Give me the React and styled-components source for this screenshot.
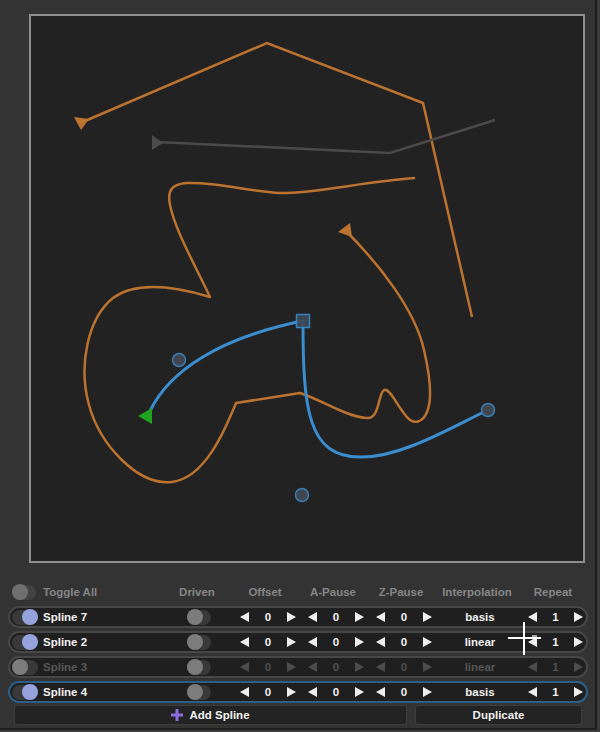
import styled, { createGlobalStyle } from "styled-components";

const GlobalStyle = createGlobalStyle`
  body {
    margin: 0;
    background: #3a3a3a;
    font-family: "Liberation Sans", Arial, sans-serif;
  }
`;

const ORANGE = "#bb732f";
const BLUE = "#3a8dcf";

const splines = [
  { id: 7, on: true, interp: "basis", repeat: 1 },
  { id: 2, on: true, interp: "linear", repeat: 1 },
  { id: 3, on: false, interp: "linear", repeat: 1 },
  { id: 4, on: true, interp: "basis", repeat: 1, selected: true },
];

const Arrow = ({ dir, muted }) => (
  <svg width="9" height="10" viewBox="0 0 9 10">
    <polygon
      points={dir === "left" ? "9,0 9,10 0,5" : "0,0 0,10 9,5"}
      fill={muted ? "#4c4c4c" : "#eeeeee"}
    />
  </svg>
);

const Stepper = ({ value, muted }) => (
  <StyledStepper $muted={muted}>
    <Arrow dir="left" muted={muted} />
    <span>{value}</span>
    <Arrow dir="right" muted={muted} />
  </StyledStepper>
);

const SplineCanvas = () => (
  <StyledCanvas>
    <svg width="552" height="545" viewBox="31 16 552 545">
      <polyline
        points="85,121 267,43 423,103 472,317"
        fill="none"
        stroke={ORANGE}
        strokeWidth="2.5"
      />
      <polygon points="74,117 89,119 81,130" fill={ORANGE} />

      <polyline
        points="157,142 390,153 495,120"
        fill="none"
        stroke="#4a4a4a"
        strokeWidth="2.5"
      />
      <polygon points="152,135 163,143 152,150" fill="#4a4a4a" />

      <path
        d="M 345 230
           C 380 265, 415 310, 424 350
           C 431 380, 432 400, 427 412
           C 423 422, 414 426, 406 416
           C 396 404, 390 388, 384 390
           C 378 393, 380 420, 366 418
           C 345 416, 322 400, 300 393
           L 236 403
           C 225 430, 205 478, 172 482
           C 138 486, 100 445, 89 405
           C 78 365, 88 318, 113 298
           C 135 282, 170 285, 210 297
           C 195 265, 175 230, 170 205
           C 167 190, 172 184, 187 183
           C 220 182, 250 192, 280 193
           C 320 193, 360 182, 415 178"
        fill="none"
        stroke={ORANGE}
        strokeWidth="2.5"
        strokeLinejoin="round"
      />
      <polygon points="338,232 350,223 352,237" fill={ORANGE} />

      <path
        d="M 150 411 C 170 370, 220 338, 302 321
           M 303 321 C 303 410, 308 457, 360 457
           C 400 458, 450 428, 488 410"
        fill="none"
        stroke={BLUE}
        strokeWidth="3"
        strokeLinecap="round"
      />
      <polygon points="138,416 152,408 152,424" fill="#1fa31f" />
      <rect x="296.5" y="314.5" width="13" height="13" fill="#3d4a57" stroke={BLUE} strokeWidth="1.5" opacity="0.9" />
      <circle cx="179" cy="360" r="6.5" fill="#3f4650" stroke="#3b7db2" strokeWidth="1.5" />
      <circle cx="302" cy="495" r="6.5" fill="#3f4650" stroke="#3b7db2" strokeWidth="1.5" />
      <circle cx="488" cy="410" r="6.5" fill="#3f4650" stroke="#3b7db2" strokeWidth="1.5" />
    </svg>
  </StyledCanvas>
);

const App = () => {
  return (
    <>
      <GlobalStyle />
      <StyledPanel>
        <SplineCanvas />
        <StyledControls>
          <StyledHeaderRow>
            <StyledCell>
              <StyledSwitch $variant="header" />
            </StyledCell>
            <StyledHeaderLabel $align="left">Toggle All</StyledHeaderLabel>
            <StyledHeaderLabel>Driven</StyledHeaderLabel>
            <span />
            <StyledHeaderLabel>Offset</StyledHeaderLabel>
            <StyledHeaderLabel>A-Pause</StyledHeaderLabel>
            <StyledHeaderLabel>Z-Pause</StyledHeaderLabel>
            <StyledHeaderLabel>Interpolation</StyledHeaderLabel>
            <StyledHeaderLabel>Repeat</StyledHeaderLabel>
          </StyledHeaderRow>

          <StyledRows>
            {splines.map((s) => (
              <StyledSplineRow key={s.id} $selected={s.selected}>
                <StyledCell>
                  <StyledSwitch $on={s.on} />
                </StyledCell>
                <StyledName $muted={!s.on}>Spline {s.id}</StyledName>
                <StyledCell $pad="12px">
                  <StyledSwitch $variant="driven" />
                </StyledCell>
                <span />
                <Stepper value={0} muted={!s.on} />
                <Stepper value={0} muted={!s.on} />
                <Stepper value={0} muted={!s.on} />
                <StyledInterp $muted={!s.on}>{s.interp}</StyledInterp>
                <StyledRepeat>
                  <Stepper value={s.repeat} muted={!s.on} />
                </StyledRepeat>
              </StyledSplineRow>
            ))}
          </StyledRows>

          <StyledButtonRow>
            <StyledButton $width="393px">
              <svg width="12" height="12" viewBox="0 0 12 12">
                <path d="M6 0 V12 M0 6 H12" stroke="#8a6ee0" strokeWidth="3" />
              </svg>
              Add Spline
            </StyledButton>
            <StyledButton $width="167px">Duplicate</StyledButton>
          </StyledButtonRow>
        </StyledControls>

        <StyledCursor width="33" height="33" viewBox="0 0 33 33">
          <path d="M0 16 H33 M16 0 V33" stroke="#ffffff" strokeWidth="2" />
          <path d="M24 14 H29" stroke="#dddddd" strokeWidth="1.5" />
        </StyledCursor>
      </StyledPanel>
    </>
  );
};

export default App;

const StyledPanel = styled.div`
  position: relative;
  box-sizing: border-box;
  width: 597px;
  height: 730px;
  padding-top: 14px;
  background: #333333;
  border-right: 2px solid #1d1d1d;
  border-bottom: 2px solid #1d1d1d;
`;

const StyledCanvas = styled.div`
  box-sizing: border-box;
  margin-left: 29px;
  width: 556px;
  height: 549px;
  border: 2px solid #8e8e8e;
  background: #222222;

  svg {
    display: block;
  }
`;

const StyledControls = styled.div`
  margin-top: 19px;
  display: flex;
  flex-direction: column;
`;

const StyledHeaderRow = styled.div`
  display: grid;
  grid-template-columns: 38px 132px 44px 12px 68px 68px 68px 84px 68px;
  align-items: center;
  height: 20px;
  margin-left: 5px;
`;

const StyledHeaderLabel = styled.div`
  color: #868686;
  font-size: 11.5px;
  font-weight: bold;
  text-align: ${({ $align }) => $align || "center"};
  white-space: nowrap;
`;

const StyledRows = styled.div`
  display: flex;
  flex-direction: column;
  gap: 3px;
  margin-top: 4px;
`;

const StyledSplineRow = styled.div`
  box-sizing: border-box;
  display: grid;
  grid-template-columns: 33px 132px 40px 19px 68px 68px 68px 84px 64px;
  align-items: center;
  width: 580px;
  height: 22px;
  margin-left: 8px;
  background: #1f1f1f;
  border: 2px solid ${({ $selected }) => ($selected ? "#2c5f87" : "#474747")};
  border-radius: 12px;
`;

const StyledCell = styled.div`
  display: flex;
  align-items: center;
  padding-left: ${({ $pad }) => $pad || "2px"};
`;

const StyledSwitch = styled.div`
  position: relative;
  width: ${({ $variant }) => ($variant ? "24px" : "26px")};
  height: 15px;
  border-radius: 8px;
  background: ${({ $variant }) => ($variant === "header" ? "#434343" : "#393939")};
  margin-left: ${({ $variant }) => ($variant === "header" ? "5px" : "0")};

  &::after {
    content: "";
    position: absolute;
    top: -0.5px;
    left: ${({ $on }) => ($on ? "auto" : "0")};
    right: ${({ $on }) => ($on ? "0" : "auto")};
    width: 16px;
    height: 16px;
    border-radius: 50%;
    background: ${({ $on, $variant }) =>
      $on ? "#95a3dc" : $variant === "header" ? "#6f6f6f" : "#7c7c7c"};
  }
`;

const StyledName = styled.div`
  color: ${({ $muted }) => ($muted ? "#575757" : "#f0f0f0")};
  font-size: 11.5px;
  font-weight: bold;
`;

const StyledStepper = styled.div`
  display: flex;
  align-items: center;
  justify-content: space-between;
  padding: 0 6px;
  color: ${({ $muted }) => ($muted ? "#505050" : "#f0f0f0")};
  font-size: 11.5px;
  font-weight: bold;

  svg {
    display: block;
  }
`;

const StyledRepeat = styled.div`
  & > div {
    padding: 0 3px 0 6px;
  }
`;

const StyledInterp = styled.div`
  text-align: center;
  color: ${({ $muted }) => ($muted ? "#555555" : "#f0f0f0")};
  font-size: 11.5px;
  font-weight: bold;
`;

const StyledButtonRow = styled.div`
  display: flex;
  gap: 8px;
  margin-top: 2px;
  margin-left: 14px;
`;

const StyledButton = styled.div`
  box-sizing: border-box;
  display: flex;
  align-items: center;
  justify-content: center;
  gap: 6px;
  width: ${({ $width }) => $width};
  height: 20px;
  background: #232323;
  border: 1px solid #3d3d3d;
  border-radius: 3px;
  color: #f0f0f0;
  font-size: 11.5px;
  font-weight: bold;
`;

const StyledCursor = styled.svg`
  position: absolute;
  left: 508px;
  top: 622px;
`;
